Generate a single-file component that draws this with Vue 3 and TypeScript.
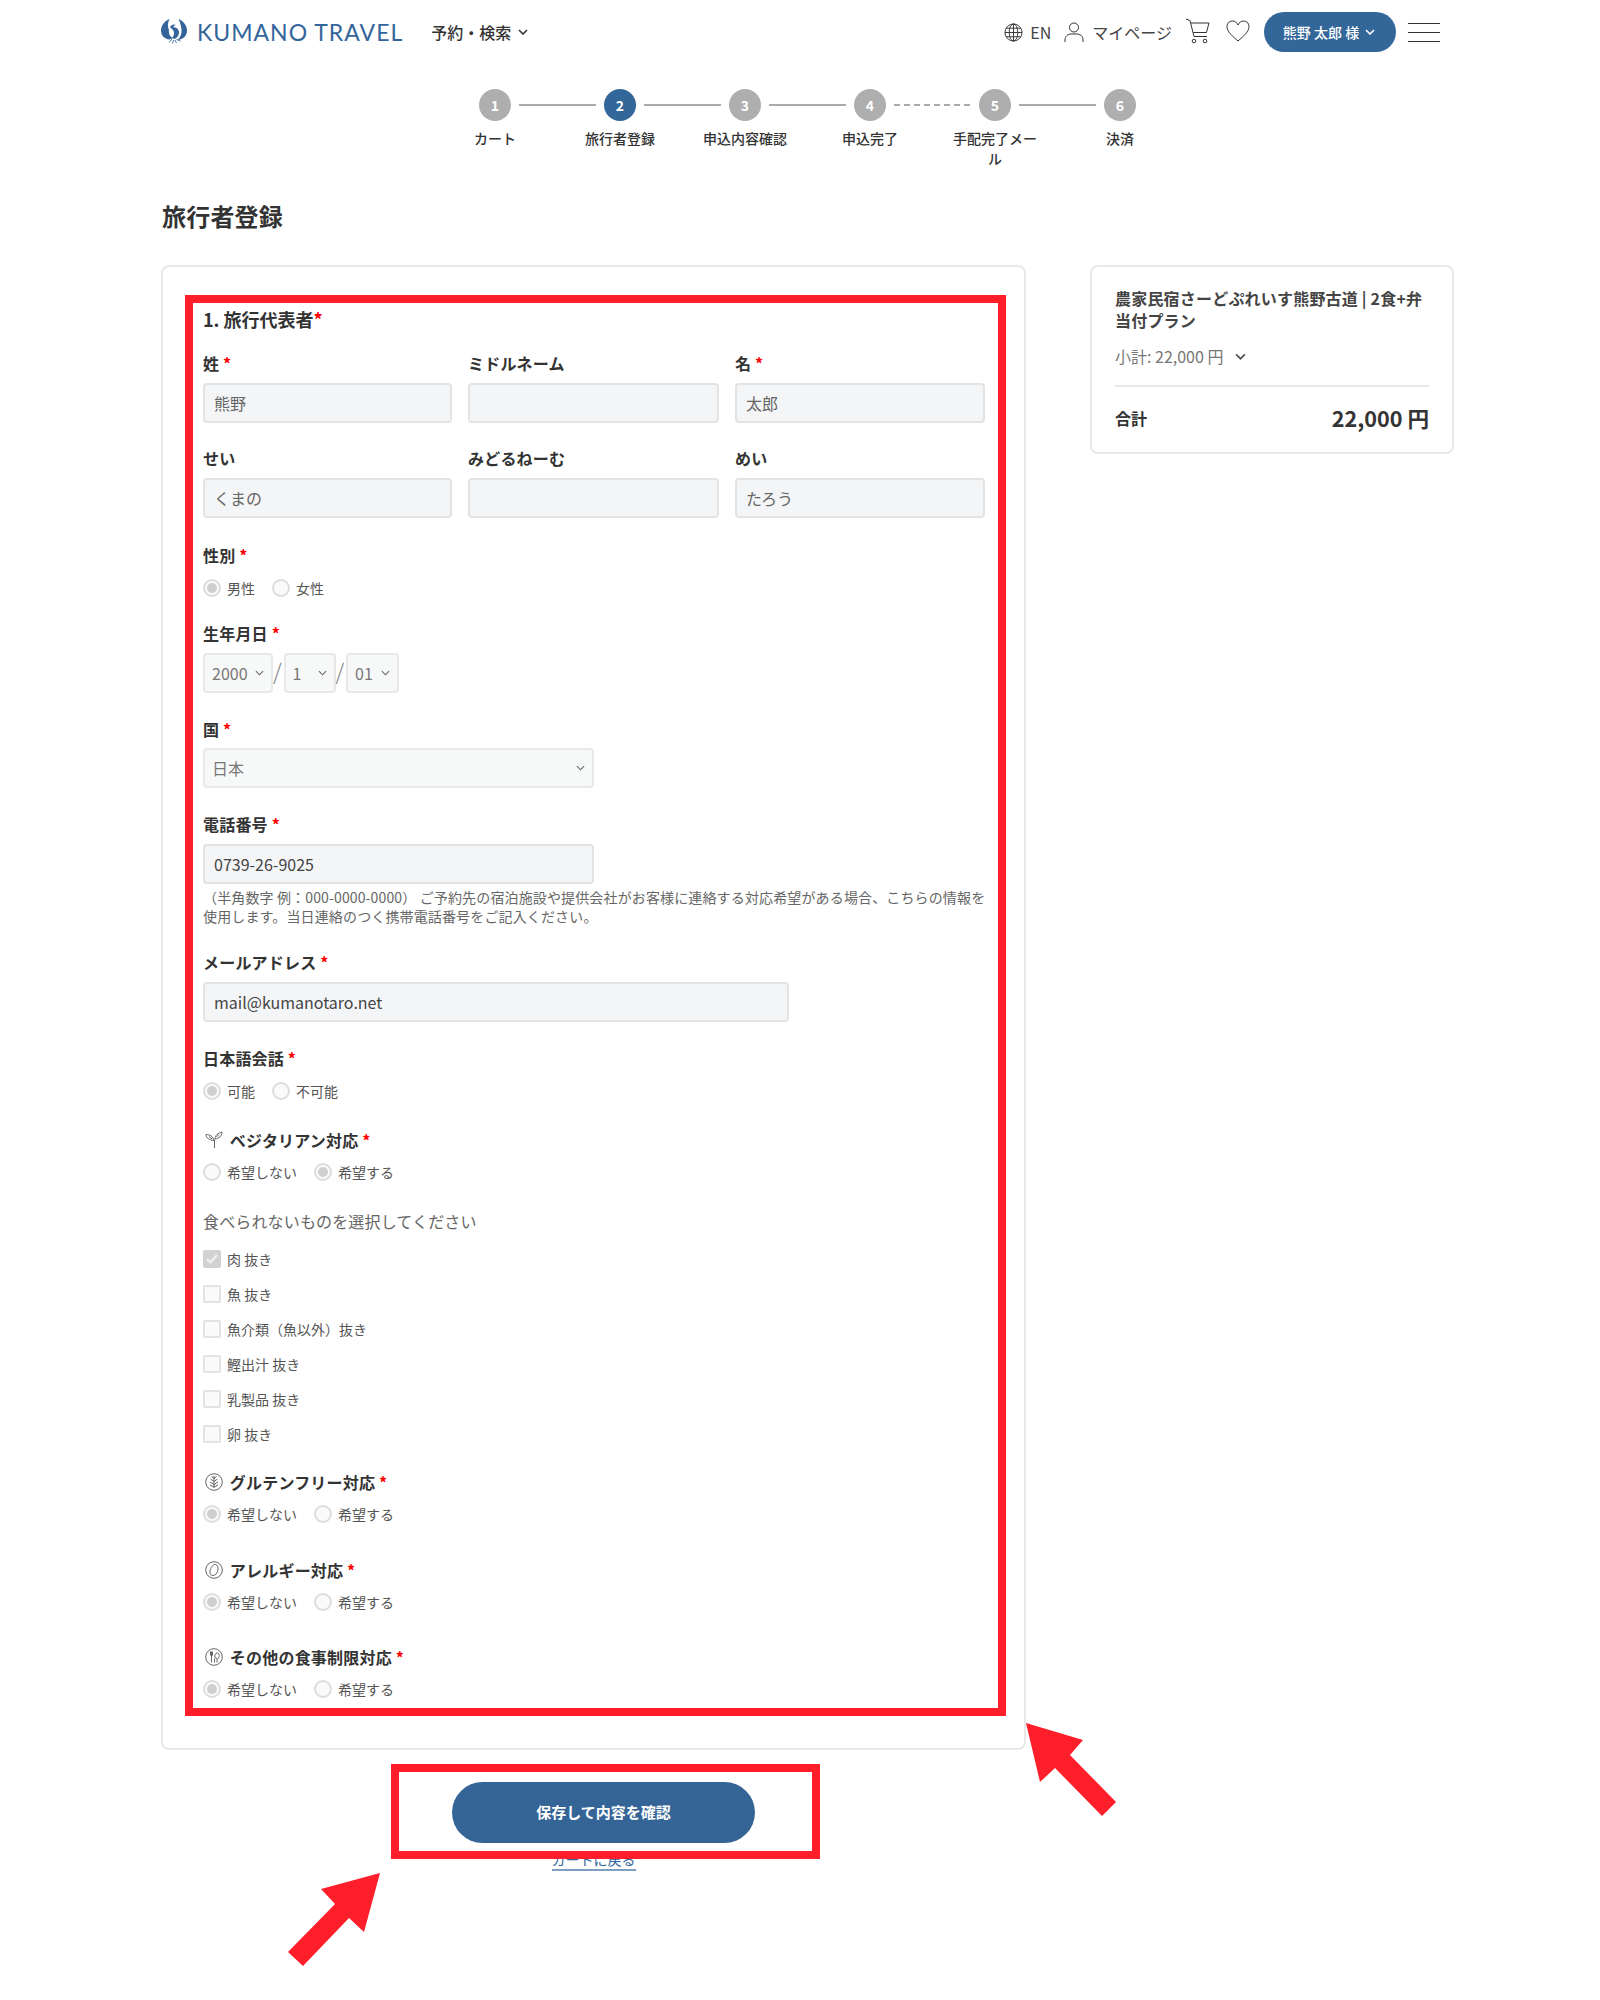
<script setup lang="ts">
const steps = ['カート', '旅行者登録', '申込内容確認', '申込完了', '手配完了メール', '決済']
const nameRows = [
  [
    { label: '姓', req: true, value: '熊野' },
    { label: 'ミドルネーム', req: false, value: '' },
    { label: '名', req: true, value: '太郎' }
  ],
  [
    { label: 'せい', req: false, value: 'くまの' },
    { label: 'みどるねーむ', req: false, value: '' },
    { label: 'めい', req: false, value: 'たろう' }
  ]
]
const dateParts = [
  { value: '2000', cls: 'w-year' },
  { value: '1', cls: 'w-month' },
  { value: '01', cls: 'w-day' }
]
const foods = ['肉 抜き', '魚 抜き', '魚介類（魚以外）抜き', '鰹出汁 抜き', '乳製品 抜き', '卵 抜き']
const hopeFirst = [
  { label: '希望しない', on: true },
  { label: '希望する', on: false }
]
</script>

<template>
  <div class="page">
    <header class="header">
      <div class="brand">
        <svg class="logo" viewBox="0 0 26 26">
          <path fill="#33659a" d="M8.500 1C4 3 0 7 0 12.500 0 17.500 3.500 21 8.500 21.500L12 20C8.500 18.500 7.500 15 8 12 6.500 9 6.500 5 8.500 1z"/>
          <path fill="#33659a" d="M17.500 1C22 3 26 7 26 12.500 26 18 22 21.500 16.500 22c3-3 4.500-6.500 4-10.500C20.200 8 19 4 17.500 1z"/>
          <path fill="#33659a" d="M9 9.500C10 7 12.500 5.500 15 7c-1.500.2-2.500 1-2.700 2.200C14.500 9 17.500 10.500 18 13.500c.4 3-1.500 6.500-4.500 7.500L11 20c1.500-1.500 2.500-4 1.800-6.500-.5-1.500-1.600-2.800-3.800-4z"/>
          <path fill="none" stroke="#33659a" stroke-width=".9" d="M11 21l-3 3.500M12.500 22l-1 3.500M14 22l1.500 3M15.500 21.500l4 1.500"/>
        </svg>
        <span class="brand-name">KUMANO TRAVEL</span>
      </div>
      <div class="nav-menu">
        <span>予約・検索</span>
        <svg class="chev" viewBox="0 0 10 6"><path d="M1 1l4 4 4-4"/></svg>
      </div>
      <div class="header-right">
        <svg class="i-globe" viewBox="0 0 20 20">
          <circle cx="10" cy="10" r="9"/>
          <ellipse cx="10" cy="10" rx="4.500" ry="9"/>
          <path d="M10 1v18M1 10h18M2.200 5.500h15.600M2.200 14.500h15.600"/>
        </svg>
        <span class="en">EN</span>
        <svg class="i-user" viewBox="0 0 20 20">
          <circle cx="10" cy="5.500" r="4.500"/>
          <path d="M1 20v-2c0-4 3-6 6-6h6c3 0 6 2 6 6v2"/>
        </svg>
        <span class="mypage">マイページ</span>
        <svg class="i-cart" viewBox="0 0 24 26">
          <path d="M0 1l4 1.500 4 16h13M5 5h18l-2.500 9.500H7.200"/>
          <circle cx="8" cy="23" r="1.800"/>
          <circle cx="19" cy="23" r="1.800"/>
        </svg>
        <svg class="i-heart" viewBox="0 0 24 22">
          <path d="M12 21C7 16.500 1 12 1 6.500 1 3 3.500 1 6.500 1 9 1 11 2.500 12 5c1-2.500 3-4 5.500-4C20.500 1 23 3 23 6.500 23 12 17 16.500 12 21z"/>
        </svg>
        <button class="user-btn" type="button">
          熊野 太郎 様
          <svg class="chev chev-white" viewBox="0 0 10 6"><path d="M1 1l4 4 4-4"/></svg>
        </button>
        <div class="burger"><i></i><i></i><i></i></div>
      </div>
    </header>

    <div class="stepper">
      <div class="track">
        <template v-for="(s, i) in steps" :key="s">
          <span class="dot" :class="{ active: i === 1 }">{{ i + 1 }}</span>
          <span v-if="i < steps.length - 1" class="line" :class="{ dashed: i === 3 }"></span>
        </template>
      </div>
      <div class="step-labels">
        <div v-for="s in steps" :key="s" class="step-label"><span>{{ s }}</span></div>
      </div>
    </div>

    <h1 class="title">旅行者登録</h1>

    <div class="main">
      <div class="left">
        <section class="card form">
          <h2 class="section-title">1. 旅行代表者<em>*</em></h2>

          <div v-for="(row, r) in nameRows" :key="r" class="name-row">
            <div v-for="f in row" :key="f.label" class="field">
              <label class="lbl">{{ f.label }}<em v-if="f.req"> *</em></label>
              <input class="inp" :value="f.value" readonly />
            </div>
          </div>

          <div class="group g26">
            <label class="lbl">性別<em> *</em></label>
            <div class="radios">
              <span class="opt"><i class="radio on"></i>男性</span>
              <span class="opt"><i class="radio"></i>女性</span>
            </div>
          </div>

          <div class="group g22">
            <label class="lbl">生年月日<em> *</em></label>
            <div class="date-row">
              <template v-for="(d, i) in dateParts" :key="d.cls">
                <div class="sel" :class="d.cls">
                  <span>{{ d.value }}</span>
                  <svg class="chev chev-sm" viewBox="0 0 10 6"><path d="M1 1l4 4 4-4"/></svg>
                </div>
                <span v-if="i < 2" class="slash">/</span>
              </template>
            </div>
          </div>

          <div class="group">
            <label class="lbl">国<em> *</em></label>
            <div class="sel w-half">
              <span>日本</span>
              <svg class="chev chev-sm" viewBox="0 0 10 6"><path d="M1 1l4 4 4-4"/></svg>
            </div>
          </div>

          <div class="group">
            <label class="lbl">電話番号<em> *</em></label>
            <input class="inp dark w-half" value="0739-26-9025" readonly />
            <p class="help">（半角数字 例：000-0000-0000） ご予約先の宿泊施設や提供会社がお客様に連絡する対応希望がある場合、こちらの情報を使用します。当日連絡のつく携帯電話番号をご記入ください。</p>
          </div>

          <div class="group">
            <label class="lbl">メールアドレス<em> *</em></label>
            <input class="inp dark w-mail" value="mail@kumanotaro.net" readonly />
          </div>

          <div class="group">
            <label class="lbl">日本語会話<em> *</em></label>
            <div class="radios">
              <span class="opt"><i class="radio on"></i>可能</span>
              <span class="opt"><i class="radio"></i>不可能</span>
            </div>
          </div>

          <div class="group">
            <label class="lbl icon-lbl">
              <svg class="diet" viewBox="0 0 18 18">
                <path d="M9.500 17V8.500M9 9.500C8 5.500 5 3.500 1 3.500c0 3.500 3 5.500 8 6zM10 8c0-3.500 3-6 7-7 0 4-3 6.500-7 7zM4 5.500l3 2.500M14 3.500l-2.500 2.500"/>
              </svg>
              ベジタリアン対応<em> *</em>
            </label>
            <div class="radios">
              <span class="opt"><i class="radio"></i>希望しない</span>
              <span class="opt"><i class="radio on"></i>希望する</span>
            </div>
          </div>

          <p class="select-note">食べられないものを選択してください</p>
          <div class="checks">
            <span v-for="(f, i) in foods" :key="f" class="opt">
              <i class="check" :class="{ on: i === 0 }">
                <svg v-if="i === 0" viewBox="0 0 12 10"><path d="M1 5l3.500 3.500L11 1"/></svg>
              </i>{{ f }}
            </span>
          </div>

          <div class="group g24">
            <label class="lbl icon-lbl">
              <svg class="diet" viewBox="0 0 18 18">
                <circle cx="9" cy="9" r="8.300"/>
                <path d="M9 3v12M5.500 6l3.500 2.500L12.500 6M5 9l4 2.500L13 9M5 12l4 2 4-2M6.500 3.500L9 5.500l2.500-2"/>
              </svg>
              グルテンフリー対応<em> *</em>
            </label>
            <div class="radios">
              <span v-for="o in hopeFirst" :key="o.label" class="opt"><i class="radio" :class="{ on: o.on }"></i>{{ o.label }}</span>
            </div>
          </div>

          <div class="group g32">
            <label class="lbl icon-lbl">
              <svg class="diet" viewBox="0 0 18 18">
                <circle cx="9" cy="9" r="8.300"/>
                <path d="M10.500 3.500c2 .5 3 3 2.500 5.500-.5 3-2.500 5.500-5 5.500-2.500 0-3.500-2-3-4.500.5-3 3-7 5.500-6.500z"/>
              </svg>
              アレルギー対応<em> *</em>
            </label>
            <div class="radios">
              <span v-for="o in hopeFirst" :key="o.label" class="opt"><i class="radio" :class="{ on: o.on }"></i>{{ o.label }}</span>
            </div>
          </div>

          <div class="group g31">
            <label class="lbl icon-lbl">
              <svg class="diet" viewBox="0 0 18 18">
                <circle cx="9" cy="9" r="8.300"/>
                <path d="M5.500 3.500v3.500c0 1 2 1 2 0V3.500M6.500 3.500v11M12 14.500v-4l-2-1c-.5-2 0-4 2-4.500s2.500 2 2 4.500l-1.500 1M9.500 14.500v-4"/>
              </svg>
              その他の食事制限対応<em> *</em>
            </label>
            <div class="radios">
              <span v-for="o in hopeFirst" :key="o.label" class="opt"><i class="radio" :class="{ on: o.on }"></i>{{ o.label }}</span>
            </div>
          </div>
        </section>

        <div class="actions">
          <button class="save" type="button">保存して内容を確認</button>
          <a class="back">カートに戻る</a>
        </div>
      </div>

      <aside class="card summary">
        <h3 class="plan">農家民宿さーどぷれいす熊野古道 | 2食+弁当付プラン</h3>
        <div class="subtotal">
          <span>小計: 22,000 円</span>
          <svg class="chev" viewBox="0 0 10 6"><path d="M1 1l4 4 4-4"/></svg>
        </div>
        <div class="total">
          <span class="total-label">合計</span>
          <span class="total-value">22,000 円</span>
        </div>
      </aside>
    </div>

    <div class="mark mark-form"></div>
    <div class="mark mark-save"></div>
    <svg class="arrows" viewBox="0 0 1600 2000">
      <polygon points="1026,1723 1083,1740 1070,1755 1116,1802 1102,1816 1055,1768 1040,1782" />
      <polygon points="380,1873 321,1889 335,1904 288,1952 303,1966 349,1918 364,1932" />
    </svg>
  </div>
</template>

<style>
html, body { background: #fff; }
</style>

<style scoped>
.page {
  position: relative;
  width: 1600px;
  height: 2000px;
  box-sizing: border-box;
  padding: 0 147px 0 161px;
  font-family: "Noto Sans CJK JP", "Noto Sans", sans-serif;
  color: #333;
  overflow: hidden;
}
.header { display: flex; align-items: center; height: 64px; }
.brand { display: flex; align-items: center; gap: 10px; }
.logo { width: 26px; height: 26px; margin-top: -2px; }
.brand-name { font-family: Lato, sans-serif; font-size: 23px; letter-spacing: 1px; color: #33659a; line-height: 28px; }
.nav-menu { display: flex; align-items: center; gap: 7px; margin-left: 28px; font-size: 16px; font-weight: 500; }
.chev { width: 10px; height: 6px; fill: none; stroke: #333; stroke-width: 1.600; }
.chev-white { stroke: #fff; margin-left: 6px; }
.chev-sm { width: 9px; height: 6px; stroke: #666; stroke-width: 1.200; }
.header-right { display: flex; align-items: center; margin-left: auto; margin-right: 13px; }
.header-right svg { fill: none; stroke: #333; stroke-width: 1; }
.header-right .chev-white { stroke: #fff; stroke-width: 1.600; }
.i-globe { width: 19px; height: 19px; }
.en { margin-left: 7px; font-size: 16px; color: #444; }
.i-user { width: 20px; height: 20px; margin-left: 13px; }
.mypage { margin-left: 8px; font-size: 16px; color: #444; }
.i-cart { width: 24px; height: 26px; margin-left: 14px; margin-top: -3px; }
.i-heart { width: 24px; height: 22px; margin-left: 16px; margin-top: -3px; }
.user-btn {
  width: 132px; height: 40px; margin-left: 14px; padding: 0 2px 0 0;
  display: flex; align-items: center; justify-content: center;
  border: 0; border-radius: 20px; background: #336699; color: #fff;
  font: 500 14px "Noto Sans CJK JP", sans-serif;
}
.burger { display: flex; flex-direction: column; gap: 8px; width: 32px; margin-left: 12px; }
.burger i { display: block; height: 1px; background: #333; }

.stepper { display: flex; flex-direction: column; align-items: center; margin: 25px 0 0 1px; }
.track { display: flex; align-items: center; width: 657px; }
.dot {
  flex: none; width: 32px; height: 32px; border-radius: 50%; background: #aeaeae; color: #fff;
  display: flex; align-items: center; justify-content: center; font-size: 14px; font-weight: 700;
}
.dot.active { background: #336699; }
.line { flex: 1; height: 2px; margin: 0 8px; background: #aaa; }
.line.dashed { background: repeating-linear-gradient(90deg, #aaa 0 6px, transparent 6px 10px); }
.step-labels { display: flex; margin-top: 7px; }
.step-label { width: 125px; display: flex; justify-content: center; text-align: center; font-size: 14px; font-weight: 500; line-height: 20px; }
.step-label span { width: 90px; }

.title { margin: 31px 0 0; padding-left: 1px; font-size: 24px; font-weight: 700; line-height: 34px; letter-spacing: .2px; color: #333; }
.main { display: flex; align-items: flex-start; gap: 64px; margin-top: 32px; }
.left { width: 865px; flex: none; }
.card { box-sizing: border-box; background: #fff; border: 2px solid #e8e8e8; border-radius: 8px; }
.form { padding: 40px 39px 47px 40px; }
.section-title { margin: 0 0 21px; font-size: 18px; font-weight: 700; line-height: 24px; }
em { color: #f00; font-style: normal; font-weight: 700; }
.name-row { display: grid; grid-template-columns: 249px 251px 250px; gap: 16px; }
.name-row + .name-row { margin-top: 24px; }
.lbl { display: block; height: 24px; font-size: 16px; font-weight: 700; line-height: 22px; letter-spacing: .2px; }
.inp {
  display: block; width: 100%; height: 40px; box-sizing: border-box; margin-top: 7px; padding: 0 9px;
  background: #f4f5f7; border: 2px solid #e3e3e3; border-radius: 4px; outline: none;
  font: 400 16px "Noto Sans CJK JP", sans-serif; color: #666;
}
.inp.dark { color: #444; }
.w-half { width: 391px; }
.w-mail { width: 586px; }
.group { margin-top: 25px; }
.g22 { margin-top: 22px; }
.g24 { margin-top: 24px; }
.g26 { margin-top: 26px; }
.g31 { margin-top: 31px; }
.g32 { margin-top: 32px; }
.radios { display: flex; gap: 17px; margin-top: 8px; }
.opt { display: flex; align-items: center; height: 24px; font-size: 14px; color: #555; }
.radio { width: 18px; height: 18px; box-sizing: border-box; margin-right: 6px; border-radius: 50%; border: 2px solid #ddd; background: #fafafa; display: flex; align-items: center; justify-content: center; }
.radio.on::after { content: ""; width: 10px; height: 10px; border-radius: 50%; background: #cfcfcf; }
.date-row { display: flex; align-items: center; margin-top: 7px; }
.sel {
  display: flex; align-items: center; justify-content: space-between; box-sizing: border-box; height: 40px; margin-top: 6px;
  padding: 0 7px; background: #f7f8f8; border: 2px solid #e8e8e8; border-radius: 4px; font-size: 16px; color: #777;
}
.date-row .sel { margin-top: 0; }
.w-year { width: 70px; }
.w-month { width: 52px; }
.w-day { width: 53px; }
.slash { width: 10.500px; margin-top: -6px; text-align: left; font-size: 22px; color: #777; font-weight: 300; line-height: 40px; }
.help { margin: 4px 0 0; font-size: 14px; line-height: 19px; letter-spacing: .14px; color: #666; width: 790px; }
.icon-lbl { display: flex; align-items: center; white-space: pre; }
.diet { width: 18px; height: 18px; margin: 0 3px 0 2px; fill: none; stroke: #555; stroke-width: .9; }
.select-note { margin: 25px 0 0; font-size: 16px; line-height: 24px; letter-spacing: .15px; color: #666; }
.checks { display: flex; flex-direction: column; gap: 11px; margin-top: 14px; }
.check { width: 18px; height: 18px; box-sizing: border-box; margin-right: 6px; border-radius: 2px; border: 2px solid #e3e3e3; background: #fafafa; display: flex; align-items: center; justify-content: center; }
.check.on { background: #d2d2d2; border-color: #d2d2d2; }
.check svg { width: 12px; height: 10px; fill: none; stroke: #f2f2f2; stroke-width: 2; }
.actions { display: flex; flex-direction: column; align-items: center; margin-top: 32px; }
.save {
  width: 303px; height: 61px; margin-left: 20px; padding: 0 0 2px; border: 0; border-radius: 31px; background: #356597; color: #fff;
  font: 700 15px "Noto Sans CJK JP", sans-serif;
}
.back { margin-top: 6px; font-size: 14px; line-height: 20px; color: #33659a; border-bottom: 2px solid #7f9fc0; }
.summary { width: 364px; flex: none; height: 189px; padding: 20px 23px 0; }
.plan { margin: 0; font-size: 16px; font-weight: 700; line-height: 22px; letter-spacing: .2px; color: #444; }
.subtotal { display: flex; align-items: center; gap: 12px; margin-top: 13px; font-size: 16px; line-height: 24px; color: #777; }
.subtotal .chev { width: 11px; height: 7px; stroke: #555; }
.total { display: flex; align-items: center; justify-content: space-between; margin-top: 17px; padding-top: 16px; border-top: 2px solid #e8e8e8; }
.total-label { font-size: 16px; font-weight: 700; }
.total-value { font-size: 21.600px; font-weight: 700; line-height: 30px; }

.mark { position: absolute; box-sizing: border-box; border: 8px solid #ff1f2b; }
.mark-form { left: 185px; top: 295px; width: 821px; height: 1421px; }
.mark-save { left: 391px; top: 1764px; width: 429px; height: 95px; }
.arrows { position: absolute; left: 0; top: 0; width: 1600px; height: 2000px; fill: #ff1f2b; pointer-events: none; }
</style>
